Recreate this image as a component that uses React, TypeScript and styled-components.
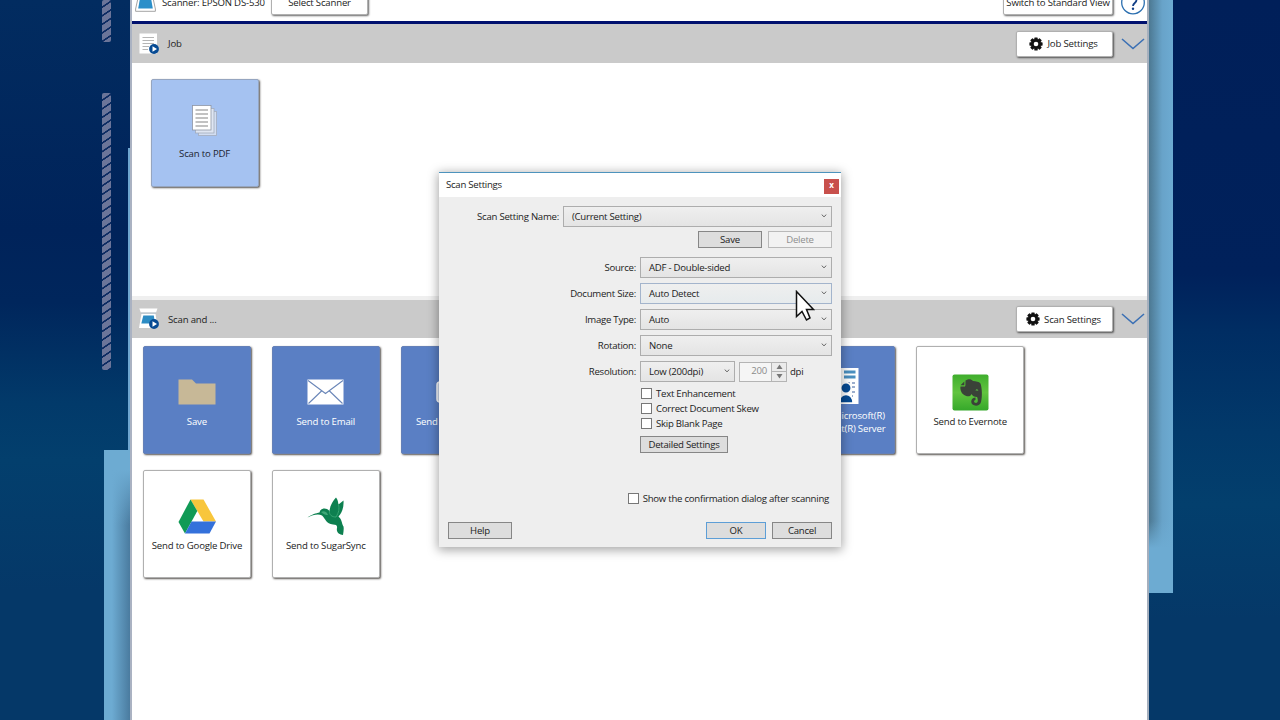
import React from "react";
import styled, { createGlobalStyle, css } from "styled-components";

const Global = createGlobalStyle`
  * { box-sizing: border-box; }
  html, body { margin: 0; padding: 0; overflow: hidden; }
  body { font-family: "Open Sans", "Noto Sans", sans-serif; font-size: 9.6px; letter-spacing: -0.18px; color: #222; }
`;

const Desktop = styled.div`
  position: relative;
  display: flex;
  width: 1280px;
  height: 720px;
  overflow: hidden;
  background: linear-gradient(180deg, #022c60 0%, #00235a 32%, #00265c 42%, #023a6a 56%, #033f6d 64%, #053868 82%, #053868 100%);
`;

const LeftSide = styled.div`
  position: relative;
  display: flex;
  flex-direction: column;
  width: 130px;
  flex: none;
`;

const Rope = styled.div<{ $h: number }>`
  width: 9px;
  height: ${(p) => p.$h}px;
  margin-left: 102px;
  flex: none;
  border-radius: 2px;
  background: repeating-linear-gradient(146deg, #6b7599 0 5px, #0c2b62 5.5px 6.7px, #6b7599 7.1px);
`;

const RopeGap = styled.div`
  height: 51px;
  flex: none;
`;

const LeftPanel = styled.div`
  width: 26px;
  height: 270px;
  margin: 80px 0 0 104px;
  background:
    linear-gradient(180deg, #6dabd2 20px, rgba(109, 171, 210, 0) 75px),
    linear-gradient(90deg, #6dabd2 0 30%, #4a7b9f 100%);
`;

const LeftSliver = styled.div`
  position: absolute;
  left: 128px;
  top: 148px;
  width: 2px;
  height: 302px;
  background: #6ea6d0;
`;

const RightSide = styled.div`
  flex: 1;
  background: linear-gradient(180deg, #001f59 0%, #00215b 38%, #002d63 46%, #02396a 60%, #033f6d 70%, #053868 86%, #053868 100%);
`;

const RightPanel = styled.div`
  width: 24px;
  height: 593px;
  background:
    linear-gradient(0deg, #6dabd2 0 45px, rgba(109, 171, 210, 0) 72px),
    linear-gradient(90deg, #4c7892 0, #68a3c9 55%, #6dabd2 100%);
`;

const Window = styled.main`
  width: 1019px;
  height: 720px;
  flex: none;
  display: flex;
  flex-direction: column;
  background: #fff;
  border-left: 2px solid #aab2c2;
  border-right: 2px solid #a5afbd;
`;

const Header = styled.header`
  height: 24px;
  flex: none;
  display: flex;
  align-items: flex-start;
  border-bottom: 3px solid #00106e;
  padding-left: 3px;
`;

const ScannerName = styled.span`
  width: 109px;
  margin-left: 6px;
  margin-top: -4px;
  line-height: 14px;
  white-space: nowrap;
`;

const raised = css`
  background: #fff;
  border: 1px solid #b0b0b0;
  border-radius: 2px;
  box-shadow: 1px 1px 2px rgba(0, 0, 0, 0.6);
`;

const HeaderButton = styled.button<{ $w: number }>`
  ${raised}
  width: ${(p) => p.$w}px;
  height: 25px;
  margin-top: -10px;
  padding: 0;
  font: inherit;
  letter-spacing: inherit;
  color: #222;
  white-space: nowrap;
`;

const Spacer = styled.div`
  flex: 1;
`;

const HelpIcon = styled.svg`
  width: 26px;
  height: 26px;
  margin: -10px 1px 0 7px;
`;

const SectionBar = styled.div<{ $ridge?: boolean }>`
  height: ${(p) => (p.$ridge ? 42 : 39)}px;
  flex: none;
  display: flex;
  align-items: center;
  padding: 0 2px 0 7px;
  background: #cacaca;
  border-top: ${(p) => (p.$ridge ? "4px solid #efefef" : "none")};
`;

const SectionTitle = styled.span`
  margin-left: 8px;
`;

const SettingsButton = styled.button`
  ${raised}
  width: 97px;
  height: 26px;
  display: flex;
  align-items: center;
  justify-content: center;
  gap: 4px;
  padding: 0 2px 0 0;
  margin-right: 8px;
  font: inherit;
  letter-spacing: inherit;
  color: #222;
`;

const JobArea = styled.section`
  height: 233px;
  flex: none;
  padding: 16px 0 0 18.6px;
`;

const TileGrid = styled.section`
  display: grid;
  grid-template-columns: repeat(7, 108px);
  gap: 16px 20.9px;
  padding: 8px 0 0 10.9px;
`;

type Tone = "pale" | "blue" | "white";
const tones = {
  pale: css`background: #a5c2f1; color: #1d2230; border-color: #95a5c0;`,
  blue: css`background: #5a7fc4; color: #fff; border-color: #6480b8;`,
  white: css`background: #fff; color: #222; border-color: #b0b0b0;`,
};

const Tile = styled.div<{ $tone: Tone }>`
  width: 108px;
  height: 108px;
  display: flex;
  flex-direction: column;
  align-items: center;
  border: 1px solid;
  border-radius: 2px;
  box-shadow: 1px 1px 2px rgba(60, 55, 50, 0.85);
  text-align: center;
  line-height: 13px;
  white-space: nowrap;
  ${(p) => tones[p.$tone]}
`;

const TileIcon = styled.div<{ $tall?: boolean; $raise?: boolean }>`
  height: ${(p) => (p.$tall ? 62 : p.$raise ? 67 : 68)}px;
  padding-top: ${(p) => (p.$tall ? 15 : p.$raise ? 15 : 22)}px;
  flex: none;
  display: flex;
  align-items: center;
  justify-content: center;
`;

const Dialog = styled.div`
  position: absolute;
  left: 439px;
  top: 172px;
  width: 402px;
  height: 375px;
  display: flex;
  flex-direction: column;
  background: #eee;
  border-top: 1px solid #4d93bd;
  letter-spacing: -0.25px;
  box-shadow: 0 2px 10px 1px rgba(0, 0, 0, 0.36);
`;

const TitleBar = styled.div`
  height: 24px;
  flex: none;
  display: flex;
  justify-content: space-between;
  background: #fff;
  padding: 5px 2px 0 7px;
  line-height: 14px;
`;

const CloseButton = styled.button`
  width: 15px;
  height: 15px;
  margin-top: 0.5px;
  padding: 0 0 2px;
  border: 0;
  background: #c8504c;
  color: #fff;
  font: bold 8px/12px "Open Sans", sans-serif;
`;

const Form = styled.div`
  flex: 1;
  display: flex;
  flex-direction: column;
  padding: 9px 9px 8px 9px;
`;

const Row = styled.div<{ $h: number; $gap?: number }>`
  display: flex;
  align-items: center;
  justify-content: flex-end;
  height: ${(p) => p.$h}px;
  flex: none;
  margin-bottom: ${(p) => p.$gap ?? 0}px;
`;

const FieldLabel = styled.span`
  margin-right: 4px;
  white-space: nowrap;
`;

const SelectBox = styled.div<{ $w: number; $hot?: boolean }>`
  width: ${(p) => p.$w}px;
  height: 21px;
  display: flex;
  align-items: center;
  justify-content: space-between;
  padding: 0 4px 1px 8px;
  border: 1px solid ${(p) => (p.$hot ? "#a3b4cc" : "#adadad")};
  background: ${(p) => (p.$hot ? "linear-gradient(#efefef, #e6ebed)" : "linear-gradient(#efefef, #e4e4e4)")};
`;

const PushButton = styled.button<{ $w: number; $kind?: "off" | "default" }>`
  width: ${(p) => p.$w}px;
  height: 17px;
  padding: 0;
  font: inherit;
  line-height: 14px;
  letter-spacing: inherit;
  color: ${(p) => (p.$kind === "off" ? "#8f8f8f" : "#222")};
  background: ${(p) => (p.$kind === "off" ? "#f2f2f2" : "#dddddd")};
  border: 1px solid ${(p) => (p.$kind === "off" ? "#b9b9b9" : p.$kind === "default" ? "#5d9ed6" : "#868686")};
  & + & { margin-left: 6px; }
`;

const Resolution = styled.div`
  display: flex;
  align-items: center;
  width: 192px;
`;

const Spinner = styled.div`
  display: flex;
  width: 48px;
  height: 20px;
  margin: 0 3px 0 4px;
  border: 1px solid #b4b4b4;
  background: #f5f5f5;
  color: #8b8b8b;
`;

const SpinValue = styled.span`
  flex: 1;
  text-align: right;
  padding-right: 4px;
  line-height: 16px;
`;

const SpinButtons = styled.div`
  width: 15px;
  display: flex;
  flex-direction: column;
  border-left: 1px solid #b4b4b4;
  background: #ebebeb;
`;

const SpinButton = styled.div`
  flex: 1;
  display: flex;
  align-items: center;
  justify-content: center;
  & + & { border-top: 1px solid #b4b4b4; }
`;

const Checks = styled.div`
  width: 192px;
  align-self: flex-end;
  display: flex;
  flex-direction: column;
  align-items: flex-start;
`;

const CheckRow = styled.label`
  display: flex;
  align-items: center;
  height: 15px;
  gap: 4px;
  padding-left: 1px;
  white-space: nowrap;
`;

const CheckBox = styled.span`
  width: 11px;
  height: 11px;
  border: 1px solid #777;
  background: #fff;
`;

const DetailLine = styled.div`
  width: 192px;
  align-self: flex-end;
  display: flex;
  padding-top: 5px;
`;

const ConfirmLine = styled.div`
  display: flex;
  justify-content: flex-end;
  padding-right: 3px;
  margin-top: 38px;
`;

const Footer = styled.div`
  display: flex;
  margin-top: auto;
`;

const Cursor = styled.svg`
  position: absolute;
  left: 795px;
  top: 290px;
  width: 20px;
  height: 32px;
`;

const Gear = () => (
  <svg width="14" height="14" viewBox="-7 -7 14 14">
    {[0, 45, 90, 135].map((a) => (
      <rect key={a} x="-1.7" y="-6.6" width="3.4" height="13.2" rx="0.6" fill="#111" transform={`rotate(${a})`} />
    ))}
    <circle r="5" fill="#111" />
    <circle r="2.3" fill="#fff" />
  </svg>
);

const Chevron = () => (
  <svg width="24" height="12" viewBox="0 0 24 12">
    <path d="M1 1 L12 10.5 L23 1" fill="none" stroke="#3b70b4" strokeWidth="1.6" />
  </svg>
);

const Arrow = () => (
  <svg width="6" height="4" viewBox="0 0 6 4">
    <path d="M0.7 0.6 L3 2.8 L5.3 0.6" fill="none" stroke="#666" strokeWidth="1" />
  </svg>
);

const PlayBadge = () => (
  <g>
    <circle cx="15" cy="16" r="4.9" fill="#064a93" />
    <path d="M13.5 13.3 L18 16 L13.5 18.7 Z" fill="#fff" />
  </g>
);

const JobIcon = () => (
  <svg width="21" height="22" viewBox="0 0 21 22">
    <rect x="0.5" y="0.5" width="17.5" height="20" fill="#fff" />
    <path d="M3.5 4.5H15M3.5 7.5H15M3.5 10.5H15M3.5 13.5H10M3.5 16.5H9" stroke="#b5b5b5" strokeWidth="1" />
    <PlayBadge />
  </svg>
);

const ScanIcon = () => (
  <svg width="21" height="22" viewBox="0 0 21 22">
    <path d="M0.3 0.5H18.5L17 4.5H1.8Z" fill="#fff" />
    <path d="M2.5 5.8H16.5L18.5 20H0Z" fill="#fff" />
    <path d="M1.8 5.1H17" stroke="#b4c3cf" strokeWidth="1" />
    <path d="M4.3 7.5H14.8L16 15.5H2.3Z" fill="#2d8cc4" />
    <PlayBadge />
  </svg>
);

const ScannerIcon = () => (
  <svg width="21" height="12" viewBox="0 0 21 12">
    <path d="M3 -2H18L20.4 9V11.3H0.6V9Z" fill="#fff" stroke="#9a9a9a" strokeWidth="0.9" />
    <path d="M5 -2H16L17.8 8.6H3.2Z" fill="#2b8fc9" />
  </svg>
);

const PagesIcon = () => (
  <svg width="26" height="32" viewBox="0 0 26 32">
    <rect x="6.5" y="6.5" width="18" height="24" fill="#d3def2" stroke="#a3acbc" strokeWidth="0.8" />
    <rect x="3.5" y="3.5" width="18.5" height="24.5" fill="#dfe6f3" stroke="#a3acbc" strokeWidth="0.8" />
    <rect x="0.5" y="0.5" width="18.5" height="24.5" fill="#fff" stroke="#8f96a3" strokeWidth="0.8" />
    <path d="M3.5 5H16M3.5 9H16M3.5 13H16M3.5 17H16M3.5 21H16" stroke="#858585" strokeWidth="1" />
  </svg>
);

const FolderIcon = () => (
  <svg width="38" height="26" viewBox="0 0 38 26">
    <path d="M0.5 0.5H14L18 4.5H37.5V25.5H0.5Z" fill="#c7b897" />
  </svg>
);

const MailIcon = () => (
  <svg width="37" height="26" viewBox="0 0 37 26">
    <rect x="0.5" y="0.5" width="36" height="25" fill="#fff" />
    <path d="M1 1.5L18.5 14.5L36 1.5M1.5 24.5L14.5 12M35.5 24.5L22.5 12" fill="none" stroke="#6a86b8" strokeWidth="1.1" />
  </svg>
);

const MonitorIcon = () => (
  <svg width="38" height="26" viewBox="0 0 38 26">
    <rect x="1" y="3" width="36" height="20" rx="3" fill="#cfdcf0" stroke="#fff" strokeWidth="1.5" />
  </svg>
);

const ServerIcon = () => (
  <svg width="38" height="38" viewBox="0 0 38 38">
    <path d="M19 1H36.5V37H19Z" fill="#fff" />
    <path d="M22 5H33.5M22 10H33.5" stroke="#4a8fc0" strokeWidth="2.8" />
    <path d="M26 16H28M30 16H33M30 20H33M30 25H33M30 29H31" stroke="#7c94bd" strokeWidth="1.3" />
    <circle cx="24" cy="21" r="5.2" fill="#064a93" stroke="#fff" strokeWidth="1.5" />
    <path d="M17 36C17 24.5 31 24.5 31 36Z" fill="#064a93" stroke="#fff" strokeWidth="1.5" />
  </svg>
);

const EvernoteIcon = () => (
  <svg width="37" height="37" viewBox="0 0 37 37">
    <defs>
      <linearGradient id="leaf" x1="0" y1="0" x2="0" y2="1">
        <stop offset="0" stopColor="#3fae2d" />
        <stop offset="0.5" stopColor="#62c43f" />
        <stop offset="1" stopColor="#35a82a" />
      </linearGradient>
    </defs>
    <rect x="0.5" y="0.5" width="36" height="36" rx="2" fill="url(#leaf)" />
    <path d="M13.5 6.5C17 4.5 19 5 21 7C24 7.5 27 7.5 28.5 9.5C30 14 30.5 22 29 28C28 32 23 32.5 20.5 30.5C18 28 19.5 23.5 23.5 23.5V26C21.5 26 21.5 29 24 29C26.5 29 26 25 25 23C22 23 20.5 22 19.5 20C18.5 23.5 14 22.5 11.5 20.5C9 19 8 14.5 8.5 12.5H13C13.5 12 13.5 10 13.5 6.5Z" fill="#3a4238" />
    <path d="M8.5 11.3L12.3 7.5V11.3Z" fill="#3a4238" />
    <path d="M23.5 16.5C24 14.8 26 15 26.3 17C25.2 16.4 24.5 16.4 23.5 16.5Z" fill="#57b944" />
  </svg>
);

const DriveIcon = () => (
  <svg width="38" height="35" viewBox="0 0 38 35">
    <path d="M12.5 0.5H25.5L38 22.5H25.5Z" fill="#f8c63c" />
    <path d="M12.5 0.5L19.3 12L7 34.5L0.5 23Z" fill="#119a56" />
    <path d="M13.5 22.5H38L31.5 34.5H7Z" fill="#3471db" />
  </svg>
);

const BirdIcon = () => (
  <svg width="38" height="38" viewBox="0 0 38 38">
    <path d="M0.5 20.5C5 17 9 16.5 12.5 15.5C13 12 17 10.5 20 12C21 12.5 22 13.5 22.5 14C23 8 26 4 29 0.5C31 3 31 5 31.5 7.5L36.5 3.5C37 10 35 16 31.5 19.5C35 22.5 34.5 26 36.5 29.5C37 32 36.5 35 36 38C32.5 37.5 29 35.5 30 31C30.5 28.5 29 27.5 26 27.5C19 26.5 18.5 22 15 18.5C11 16.5 6 18 0.5 20.5Z" fill="#0d8050" />
    <path d="M22.5 14C22 18 25 20 29 20C32 15 32.5 12 31.5 7.5" fill="none" stroke="#35a572" strokeWidth="1" />
    <path d="M14 15C17 13 20 15 21 18C19 18 16.5 17.5 14 15Z" fill="#3fa777" />
  </svg>
);

const tiles: { label: React.ReactNode; tone: Tone; icon?: React.ReactNode; tall?: boolean }[] = [
  { label: "Save", tone: "blue", icon: <FolderIcon /> },
  { label: "Send to Email", tone: "blue", icon: <MailIcon /> },
  { label: "Send to FTP Client", tone: "blue", icon: <MonitorIcon /> },
  { label: "", tone: "blue" },
  { label: "", tone: "blue" },
  { label: <>Send to Microsoft(R)<br />SharePoint(R) Server</>, tone: "blue", icon: <ServerIcon />, tall: true },
  { label: "Send to Evernote", tone: "white", icon: <EvernoteIcon /> },
  { label: "Send to Google Drive", tone: "white", icon: <DriveIcon /> },
  { label: "Send to SugarSync", tone: "white", icon: <BirdIcon /> },
];

const fields = [
  { label: "Source:", value: "ADF - Double-sided" },
  { label: "Document Size:", value: "Auto Detect", hot: true },
  { label: "Image Type:", value: "Auto" },
  { label: "Rotation:", value: "None" },
];

function ScanSettings() {
  return (
    <Dialog>
      <TitleBar>
        <span>Scan Settings</span>
        <CloseButton>x</CloseButton>
      </TitleBar>
      <Form>
        <Row $h={21} $gap={4}>
          <FieldLabel>Scan Setting Name:</FieldLabel>
          <SelectBox $w={269}>(Current Setting)<Arrow /></SelectBox>
        </Row>
        <Row $h={17} $gap={9}>
          <PushButton $w={64}>Save</PushButton>
          <PushButton $w={64} $kind="off">Delete</PushButton>
        </Row>
        {fields.map((f) => (
          <Row key={f.label} $h={21} $gap={5}>
            <FieldLabel>{f.label}</FieldLabel>
            <SelectBox $w={192} $hot={f.hot}>{f.value}<Arrow /></SelectBox>
          </Row>
        ))}
        <Row $h={21} $gap={4}>
          <FieldLabel>Resolution:</FieldLabel>
          <Resolution>
            <SelectBox $w={95}>Low (200dpi)<Arrow /></SelectBox>
            <Spinner>
              <SpinValue>200</SpinValue>
              <SpinButtons>
                <SpinButton><svg width="7" height="5"><path d="M0.5 5L3.5 0.5L6.5 5Z" fill="#777" /></svg></SpinButton>
                <SpinButton><svg width="7" height="5"><path d="M0.5 0L3.5 4.5L6.5 0Z" fill="#777" /></svg></SpinButton>
              </SpinButtons>
            </Spinner>
            dpi
          </Resolution>
        </Row>
        <Checks>
          <CheckRow><CheckBox />Text Enhancement</CheckRow>
          <CheckRow><CheckBox />Correct Document Skew</CheckRow>
          <CheckRow><CheckBox />Skip Blank Page</CheckRow>
        </Checks>
        <DetailLine>
          <PushButton $w={88}>Detailed Settings</PushButton>
        </DetailLine>
        <ConfirmLine>
          <CheckRow><CheckBox />Show the confirmation dialog after scanning</CheckRow>
        </ConfirmLine>
        <Footer>
          <PushButton $w={64}>Help</PushButton>
          <Spacer />
          <PushButton $w={60} $kind="default">OK</PushButton>
          <PushButton $w={60}>Cancel</PushButton>
        </Footer>
      </Form>
    </Dialog>
  );
}

export default function App() {
  return (
    <>
      <Global />
      <Desktop>
        <LeftSide>
          <Rope $h={42} />
          <RopeGap />
          <Rope $h={277} />
          <LeftPanel />
          <LeftSliver />
        </LeftSide>
        <Window>
          <Header>
            <ScannerIcon />
            <ScannerName>Scanner: EPSON DS-530</ScannerName>
            <HeaderButton $w={97}>Select Scanner</HeaderButton>
            <Spacer />
            <HeaderButton $w={110}>Switch to Standard View</HeaderButton>
            <HelpIcon viewBox="0 0 26 26">
              <circle cx="13" cy="12.5" r="11.3" fill="#fff" stroke="#2b6fb0" strokeWidth="1.3" />
              <path d="M9.5 10C9.5 6 16.5 6 16.5 10C16.5 13 13 13 13 16" fill="none" stroke="#123f86" strokeWidth="1.8" />
              <circle cx="13" cy="18.7" r="1.2" fill="#123f86" />
            </HelpIcon>
          </Header>
          <SectionBar>
            <JobIcon />
            <SectionTitle>Job</SectionTitle>
            <Spacer />
            <SettingsButton><Gear />Job Settings</SettingsButton>
            <Chevron />
          </SectionBar>
          <JobArea>
            <Tile $tone="pale">
              <TileIcon $raise><PagesIcon /></TileIcon>
              Scan to PDF
            </Tile>
          </JobArea>
          <SectionBar $ridge>
            <ScanIcon />
            <SectionTitle>Scan and ...</SectionTitle>
            <Spacer />
            <SettingsButton><Gear />Scan Settings</SettingsButton>
            <Chevron />
          </SectionBar>
          <TileGrid>
            {tiles.map((t, i) => (
              <Tile key={i} $tone={t.tone}>
                <TileIcon $tall={t.tall}>{t.icon}</TileIcon>
                <span>{t.label}</span>
              </Tile>
            ))}
          </TileGrid>
        </Window>
        <RightSide>
          <RightPanel />
        </RightSide>
        <ScanSettings />
        <Cursor viewBox="0 0 20 32">
          <path d="M1.5 1.5V26.5L7 21.5L11.5 30L15 28L11.5 19.5H18.5Z" fill="#fff" stroke="#111" strokeWidth="1.5" />
        </Cursor>
      </Desktop>
    </>
  );
}
